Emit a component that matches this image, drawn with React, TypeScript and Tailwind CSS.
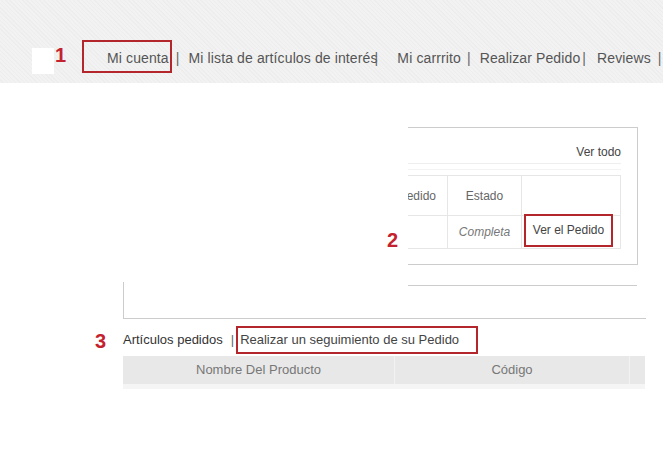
import React from "react";

const RED = "text-[#c4222e]";

export default function App() {
  return (
    <div className="w-[663px] h-[455px] overflow-hidden bg-white font-['Liberation_Sans',Arial,sans-serif] relative">
      {/* Header */}
      <header className="relative h-[83px] overflow-hidden flex items-start pl-[32px] bg-[#f0f0f0] bg-[repeating-linear-gradient(45deg,#f2f2f2_0px,#f2f2f2_2px,#ededed_2px,#ededed_3px)]">
        <div className="mt-[48px] w-[22px] h-[26px] bg-white shrink-0" />
        <span className={`absolute left-[55px] top-[40px] text-[20px] font-bold ${RED}`}>1</span>
        <nav className="mt-[40px] ml-[28px] flex items-center h-[33px] pt-[3px] whitespace-nowrap text-[14px] tracking-[0.12px] text-[#555] shrink-0">
          <span className="h-[33px] mt-[-3px] border-2 border-[#b3262b] pl-[23px] pr-[1px] pt-[3px] flex items-center">Mi cuenta</span>
          <span className="ml-[4px] mr-[9px] text-[#666]">|</span>
          <span>Mi lista de artículos de interés</span>
          <span className="ml-[-3px] mr-[19px] text-[#666]">|</span>
          <span>Mi carrrito</span>
          <span className="ml-[6px] mr-[9px] text-[#666]">|</span>
          <span>Realizar Pedido</span>
          <span className="ml-[2px] mr-[11px] text-[#666]">|</span>
          <span>Reviews</span>
          <span className="ml-[7px] text-[#666]">|</span>
        </nav>
      </header>

      {/* Inset panel */}
      <div className="relative pt-[44px]">
        <span className={`absolute left-[387px] top-[142px] text-[20px] font-bold ${RED}`}>2</span>
        <div className="ml-[408px] w-[230px] h-[138px] border-t border-r border-b border-[#cccccc] overflow-hidden">
          <div className="pr-[16px]">
            <div className="h-[35px] flex items-end justify-end pb-[4px] text-[12px] leading-[14px] text-[#444]">Ver todo</div>
            <div className="border-t border-[#eeeeee]" />
            <div className="mt-[5px] border-t border-[#f3f3f3]" />
            <div className="mt-[5px] ml-[-60px] border-t border-r border-b border-[#e6e6e6] text-[12px] text-[#666]">
              <div className="grid grid-cols-[100px_74px_98px] h-[40px] border-b border-[#e6e6e6]">
                <div className="flex items-center justify-end pr-[11px] border-r border-[#e6e6e6]">Pedido</div>
                <div className="flex items-center justify-center border-r border-[#e6e6e6]">Estado</div>
                <div />
              </div>
              <div className="grid grid-cols-[100px_74px_98px] h-[32px]">
                <div className="border-r border-[#e6e6e6]" />
                <div className="flex items-center justify-center border-r border-[#e6e6e6] italic text-[#777]">Completa</div>
                <div className="flex items-center">
                  <span className="ml-[2px] mt-[-4px] w-[89px] h-[33px] border-2 border-[#b3262b] flex items-center justify-center text-[#444]">Ver el Pedido</span>
                </div>
              </div>
            </div>
          </div>
        </div>

        {/* Main box */}
        <div className="mt-[17px] ml-[123px] w-[523px] h-[37px] border-l border-b border-[#cccccc] pt-[3px] pl-[284px]">
          <div className="w-[229px] border-t border-[#cccccc]" />
        </div>

        {/* Artículos row */}
        <div className="relative mt-[7px] ml-[123px] flex items-center h-[28px] text-[13px] whitespace-nowrap">
          <span className={`absolute left-[-28px] top-[5px] text-[20px] font-bold leading-[20px] ${RED}`}>3</span>
          <span className="text-[#333]">Artículos pedidos</span>
          <span className="ml-[8px] mr-[2px] text-[#666]">|</span>
          <span className="h-[28px] border-2 border-[#b3262b] pl-[2px] pr-[17px] flex items-center text-[#444]">Realizar un seguimiento de su Pedido</span>
        </div>

        {/* Table header */}
        <div className="mt-[2px] ml-[123px] w-[522px] h-[28px] bg-[#e8e8e8] grid grid-cols-[272px_235px_15px] text-[13px] text-[#777]">
          <div className="flex items-center justify-center border-r border-[#f2f2f2]">Nombre Del Producto</div>
          <div className="flex items-center justify-center border-r border-[#f2f2f2]">Código</div>
          <div />
        </div>
        <div className="ml-[123px] w-[522px] h-[5px] bg-[#f5f5f5]" />
      </div>
    </div>
  );
}
